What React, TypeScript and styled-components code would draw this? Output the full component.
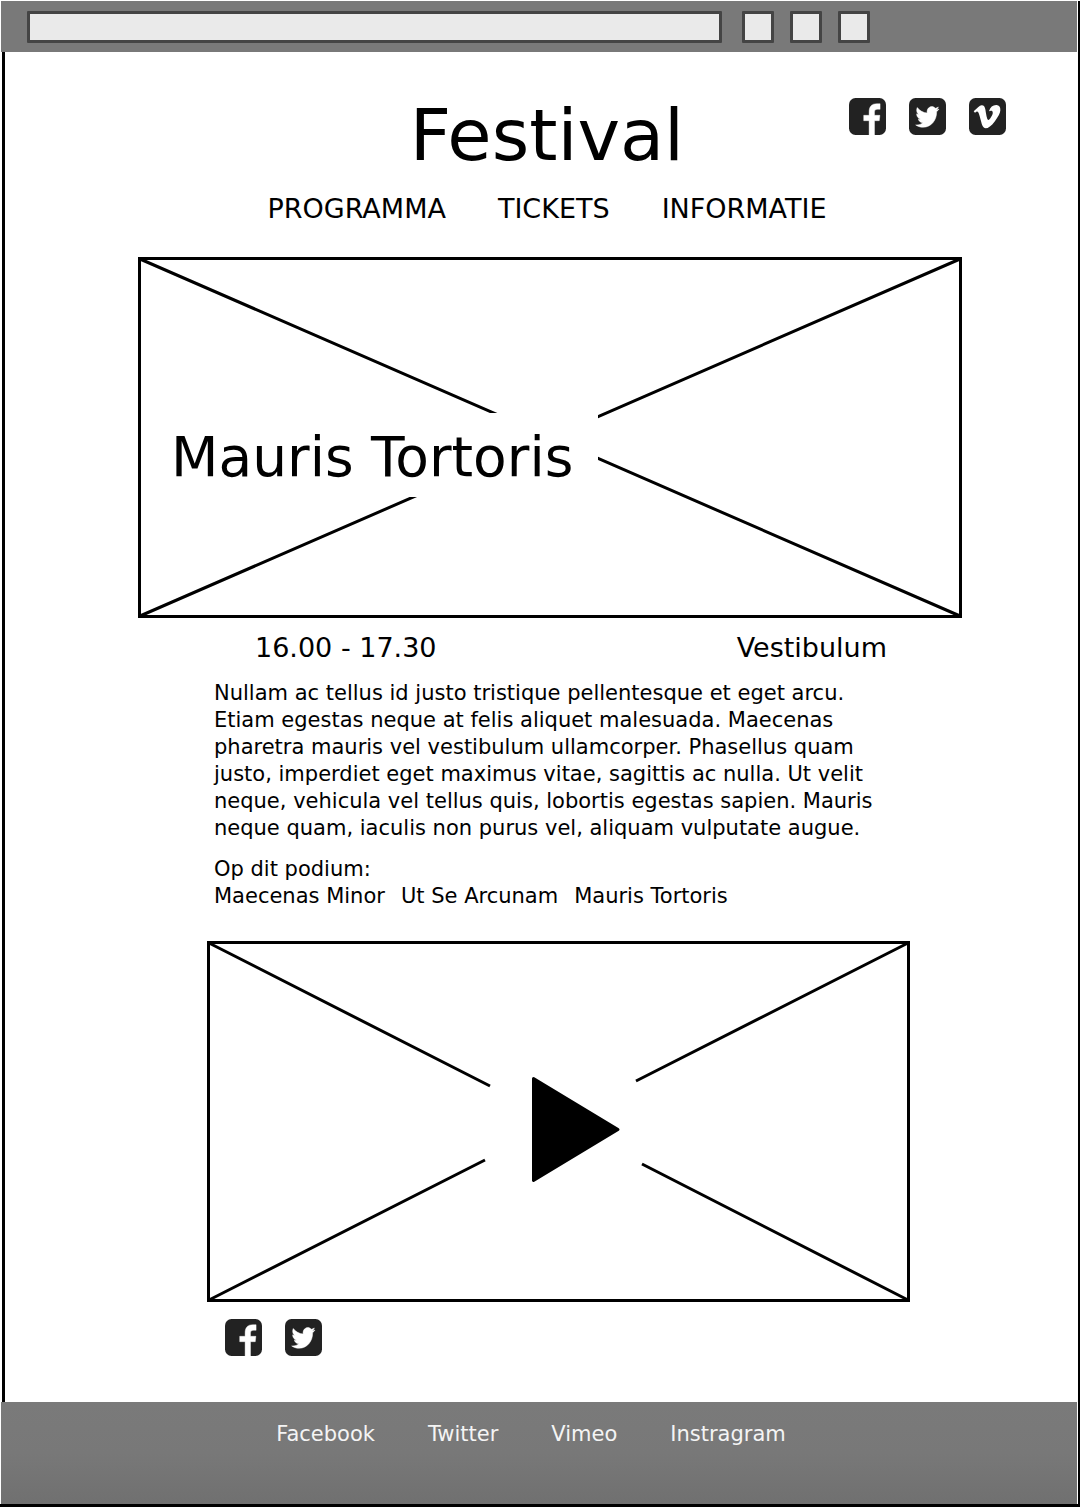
import React from "react";
import styled, { createGlobalStyle } from "styled-components";

const GlobalStyle = createGlobalStyle`
  *, *::before, *::after { box-sizing: border-box; }
  body {
    margin: 0;
    background: #fff;
    color: #000;
    font-family: Verdana, "DejaVu Sans", sans-serif;
  }
  h1, h2, p, ul { margin: 0; padding: 0; font-weight: 400; }
  ul { list-style: none; }
  a { color: inherit; text-decoration: none; }
`;

const Page = styled.div`
  display: flex;
  flex-direction: column;
  min-height: 100vh;
  padding: 1px 0 2px;
`;

const Window = styled.div`
  flex: 1;
  display: flex;
  flex-direction: column;
  border-right: 2px solid #000;
  border-bottom: 3px solid #000;
`;

const Toolbar = styled.div`
  display: flex;
  align-items: center;
  height: 51px;
  margin: 0 1px;
  padding: 0 207px 0 26px;
  background: #797979;
`;

const Address = styled.input`
  flex: 1;
  min-width: 0;
  height: 32px;
  margin-right: 20px;
  padding: 0 8px;
  border: 3px solid #444;
  border-radius: 1px;
  background: #eaeaea;
  font: inherit;
`;

const ToolButtons = styled.div`
  display: flex;
  gap: 16px;
`;

const ToolButton = styled.button`
  width: 32px;
  height: 32px;
  padding: 0;
  border: 3px solid #444;
  border-radius: 1px;
  background: #eaeaea;
`;

const Main = styled.main`
  flex: 1;
  margin-left: 2px;
  padding: 41px 0 32px 17px;
  border-left: 3px solid #000;
`;

const Header = styled.header`
  margin-right: 6px;
`;

const Masthead = styled.div`
  display: grid;
  grid-template-columns: 1fr auto 1fr;
  align-items: start;
  padding: 0 66px;
`;

const Title = styled.h1`
  grid-column: 2;
  font-size: 72px;
  line-height: 84px;
`;

const SocialList = styled.ul<{ $corner?: boolean }>`
  display: flex;
  gap: 23px;
  justify-content: ${(p) => (p.$corner ? "flex-end" : "flex-start")};
  padding: ${(p) => (p.$corner ? "5px 0 0" : "17px 18px 0")};
`;

const SocialLink = styled.a`
  display: block;
  width: 37px;
  height: 37px;

  svg { display: block; }
`;

const Nav = styled.nav`
  display: flex;
  justify-content: center;
  gap: 52px;
  margin-top: 15px;
  font-size: 27px;
  line-height: 34px;
`;

const Content = styled.div`
  max-width: 824px;
  margin: 31px auto 0;
`;

const Frame = styled.div`
  position: relative;
`;

const Wireframe = styled.svg`
  display: block;
  width: 100%;
  height: auto;
  fill: none;
  stroke: #000;
  stroke-width: 3;
`;

const HeroTitle = styled.h2`
  position: absolute;
  top: 156px;
  left: 12px;
  padding: 4px 25px 0 21px;
  background: #fff;
  font-size: 55px;
  line-height: 80px;
  white-space: nowrap;
`;

const Article = styled.article`
  padding: 0 52px 0 69px;
`;

const Schedule = styled.div`
  display: flex;
  justify-content: space-between;
  padding: 13px 23px 0 48px;
  font-size: 27px;
  line-height: 34px;
`;

const Copy = styled.div`
  padding: 15px 10px 31px 7px;
  font-size: 21px;
  line-height: 27px;
`;

const Stage = styled.div`
  margin-top: 14px;
`;

const Artists = styled.ul`
  display: flex;
  flex-wrap: wrap;
  gap: 0 16px;
`;

const PlayButton = styled.button`
  position: absolute;
  top: 135px;
  left: 324px;
  padding: 0;
  border: 0;
  background: none;

  svg { display: block; }
`;

const Footer = styled.footer`
  display: flex;
  justify-content: center;
  gap: 53px;
  height: 102px;
  margin: 0 1px;
  padding: 19px 16px 0 0;
  background: linear-gradient(#7a7a7a, #787878 50%, #707070);
  color: #f4f4f4;
  font-size: 21px;
  line-height: 27px;
`;

type Network = "Facebook" | "Twitter" | "Vimeo";

const glyphs: Record<Network, React.ReactNode> = {
  Facebook: (
    <path
      stroke="#fff"
      strokeWidth=".4"
      d="M20.1 37V22.700h-5.400v-5.400h5.400v-3.500c0-5.400 2.700-8.100 7.700-8.100h3.300v5.600h-2.300c-2.600 0-3.300.8-3.300 3v3h5.400l-.6 5.400h-4.800V37z"
    />
  ),
  Twitter: (
    <path
      transform="translate(6.7 6.200) scale(.0455 .0497)"
      stroke="#fff"
      strokeWidth="10"
      d="M459.37 151.716c.325 4.548.325 9.097.325 13.645 0 138.72-105.583 298.558-298.558 298.558-59.452 0-114.68-17.219-161.137-47.106 8.447.974 16.568 1.299 25.34 1.299 49.055 0 94.213-16.568 130.274-44.832-46.132-.975-84.792-31.188-98.112-72.772 6.498.974 12.995 1.624 19.818 1.624 9.421 0 18.843-1.3 27.614-3.573-48.081-9.747-84.143-51.98-84.143-102.985v-1.299c13.969 7.797 30.214 12.67 47.431 13.319-28.264-18.843-46.781-51.005-46.781-87.391 0-19.492 5.197-37.36 14.294-52.954 51.655 63.675 129.3 105.258 216.365 109.807-1.624-7.797-2.599-15.918-2.599-24.04 0-57.828 46.782-104.934 104.934-104.934 30.213 0 57.502 12.67 76.67 33.137 23.715-4.548 46.456-13.32 66.599-25.34-7.798 24.366-24.366 44.833-46.132 57.827 21.117-2.273 41.584-8.122 60.426-16.243-14.292 20.791-32.161 39.308-52.628 54.253z"
    />
  ),
  Vimeo: (
    <path
      transform="translate(4.7 3.1) scale(.0595 .0602)"
      d="M447.8 153.6c-2 43.6-32.4 103.3-91.4 179.1-60.9 79.2-112.4 118.8-154.6 118.8-26.1 0-48.2-24.1-66.3-72.3C100.3 250 85.3 174.3 56.2 174.3c-3.4 0-15.1 7.1-35.2 21.1L0 168.2c51.6-45.3 100.9-95.7 131.8-98.5 34.9-3.4 56.3 20.5 64.4 71.5 28.7 181.5 41.4 208.9 93.6 126.7 18.7-29.6 28.8-52.1 30.2-67.6 4.8-45.9-35.8-42.8-63.3-31 22-72.1 64.1-107.1 126.2-105.1 45.8 1.2 67.5 31.1 64.9 89.4z"
    />
  ),
};

function Social({ networks, corner }: { networks: Network[]; corner?: boolean }) {
  return (
    <SocialList $corner={corner}>
      {networks.map((name) => (
        <li key={name}>
          <SocialLink href="#" aria-label={name}>
            <svg width="37" height="37" viewBox="0 0 37 37" fill="#fff" aria-hidden="true">
              <rect width="37" height="37" rx="6.5" fill="#222" />
              {glyphs[name]}
            </svg>
          </SocialLink>
        </li>
      ))}
    </SocialList>
  );
}

const pages = ["PROGRAMMA", "TICKETS", "INFORMATIE"];
const artists = ["Maecenas Minor", "Ut Se Arcunam", "Mauris Tortoris"];
const footerLinks = ["Facebook", "Twitter", "Vimeo", "Instragram"];

export default function App() {
  return (
    <Page>
      <GlobalStyle />
      <Window>
        <Toolbar>
          <Address type="text" aria-label="Address" />
          <ToolButtons>
            <ToolButton type="button" aria-label="Back" />
            <ToolButton type="button" aria-label="Forward" />
            <ToolButton type="button" aria-label="Reload" />
          </ToolButtons>
        </Toolbar>

        <Main>
          <Header>
            <Masthead>
              <Title>Festival</Title>
              <Social networks={["Facebook", "Twitter", "Vimeo"]} corner />
            </Masthead>
            <Nav>
              {pages.map((label) => (
                <a key={label} href="#">{label}</a>
              ))}
            </Nav>
          </Header>

          <Content>
            <Frame>
              <Wireframe viewBox="0 0 824 361" aria-hidden="true">
                <rect x="1.5" y="1.5" width="821" height="358" />
                <path d="M2 2 822 359M2 359 822 2" />
              </Wireframe>
              <HeroTitle>Mauris Tortoris</HeroTitle>
            </Frame>

            <Article>
              <Schedule>
                <time>16.00 - 17.30</time>
                <span>Vestibulum</span>
              </Schedule>
              <Copy>
                <p>
                  Nullam ac tellus id justo tristique pellentesque et eget arcu. Etiam egestas neque
                  at felis aliquet malesuada. Maecenas pharetra mauris vel vestibulum ullamcorper.
                  Phasellus quam justo, imperdiet eget maximus vitae, sagittis ac nulla. Ut velit
                  neque, vehicula vel tellus quis, lobortis egestas sapien. Mauris neque quam,
                  iaculis non purus vel, aliquam vulputate augue.
                </p>
                <Stage>
                  <p>Op dit podium:</p>
                  <Artists>
                    {artists.map((name) => (
                      <li key={name}><a href="#">{name}</a></li>
                    ))}
                  </Artists>
                </Stage>
              </Copy>

              <Frame>
                <Wireframe viewBox="0 0 703 361" aria-hidden="true">
                  <rect x="1.5" y="1.5" width="700" height="358" />
                  <path d="M2 2 283 145M429 140 701 2M2 359 278 219M435 223 701 359" />
                </Wireframe>
                <PlayButton type="button" aria-label="Play">
                  <svg width="90" height="107" viewBox="0 0 90 107" aria-hidden="true">
                    <path
                      d="M2.500 2.500 87 53.500 2.500 104.500z"
                      stroke="#000"
                      strokeWidth="3"
                      strokeLinejoin="round"
                    />
                  </svg>
                </PlayButton>
              </Frame>

              <Social networks={["Facebook", "Twitter"]} />
            </Article>
          </Content>
        </Main>

        <Footer>
          {footerLinks.map((label) => (
            <a key={label} href="#">{label}</a>
          ))}
        </Footer>
      </Window>
    </Page>
  );
}
